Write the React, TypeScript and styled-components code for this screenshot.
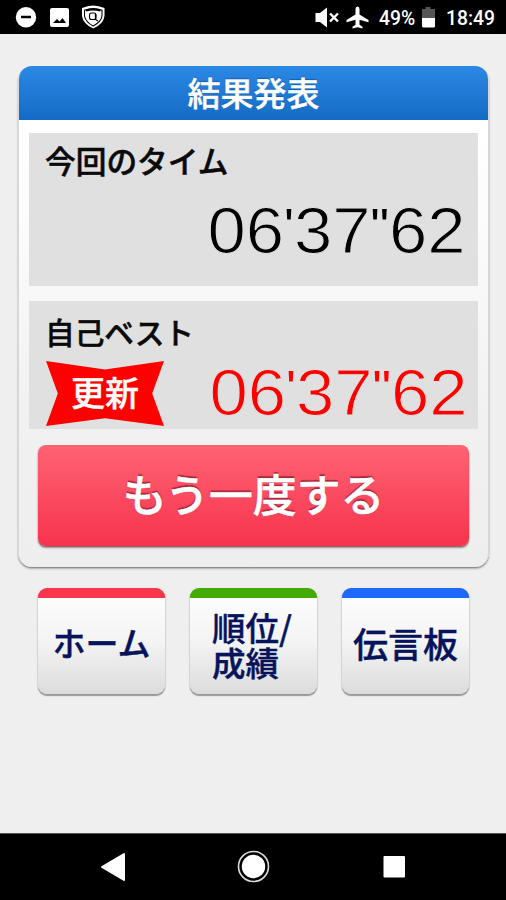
import React from "react";
import styled, { createGlobalStyle } from "styled-components";

const GlobalStyle = createGlobalStyle`
  * { box-sizing: border-box; }
  body { margin: 0; background: #efefef; }
`;

const Screen = styled.div`
  width: 506px;
  height: 900px;
  display: flex;
  flex-direction: column;
  background: #efefef;
  font-family: "Noto Sans CJK JP", sans-serif;
  overflow: hidden;
`;

const StatusBar = styled.header`
  height: 34px;
  flex: none;
  display: flex;
  justify-content: space-between;
  background: #000;
  color: #fff;
  font: 500 19.3px/37px Roboto, sans-serif;
`;

const StatusGroup = styled.div`
  display: flex;
  align-items: flex-start;
`;

const StatusText = styled.span<{ $left: number; $width: number }>`
  margin-left: ${(p) => p.$left}px;
  width: ${(p) => p.$width}px;
  white-space: nowrap;
`;

const Content = styled.main`
  flex: 1;
  padding: 32px 17px 0 18px;
`;

const Card = styled.section`
  height: 501px;
  border-radius: 14px;
  background: linear-gradient(#fff 12%, #fcfcfc 30%, #f1f1f1 70%, #eeeeee);
  box-shadow: inset 1px 0 #d8d8d8, inset -1px 0 #d8d8d8, 0 1px 1px #888, 0 2px 2px #b5b5b5;
  display: flex;
  flex-direction: column;
`;

const CardHeader = styled.h1`
  margin: 0 1px 0 1px;
  height: 54px;
  flex: none;
  border-radius: 13px 13px 0 0;
  background: linear-gradient(#2c88e5, #146bc4);
  color: #fff;
  font-size: 33px;
  font-weight: 500;
  line-height: 53px;
  text-align: center;
  -webkit-text-stroke: 0.4px #fff;
  text-shadow: 0 -1px 1px #1459a5;
`;

const Panel = styled.div<{ $height: number; $top: number }>`
  margin: ${(p) => p.$top}px 11px 0 11px;
  height: ${(p) => p.$height}px;
  flex: none;
  background: #e0e0e0;
  padding: 9px 12px 0 16px;
`;

const Label = styled.h2<{ $size: number; $line: number }>`
  margin: 0;
  height: 42px;
  font-size: ${(p) => p.$size}px;
  font-weight: 500;
  line-height: ${(p) => p.$line}px;
  white-space: nowrap;
  color: #0a0a0a;
  -webkit-text-stroke: 0.5px #0a0a0a;
`;

const TimeRow = styled.div<{ $top: number; $shift: number }>`
  display: flex;
  justify-content: space-between;
  align-items: flex-start;
  margin-top: ${(p) => p.$top}px;
  margin-right: ${(p) => -p.$shift}px;
`;

const TimeText = styled.div<{ $color: string }>`
  display: flex;
  margin-left: auto;
  font: 65px/64px "Liberation Sans", sans-serif;
  color: ${(p) => p.$color};
  -webkit-text-stroke: 1.1px #e0e0e0;
  transform: scaleX(1.06);
  transform-origin: right center;
  white-space: nowrap;
`;

const Mark = styled.span`
  font-size: 49px;
  line-height: 52.5px;
  -webkit-text-stroke-width: 0;
`;

const Ribbon = styled.div`
  width: 118px;
  height: 65px;
  margin-left: 1px;
  background: #f00;
  color: #fff;
  clip-path: polygon(0 0, 50% 13%, 100% 0, 90% 50%, 100% 100%, 50% 88%, 0 100%, 10% 50%);
  font-size: 34px;
  font-weight: 500;
  line-height: 62px;
  text-align: center;
  -webkit-text-stroke: 0.4px #fff;
`;

const RetryButton = styled.button`
  margin: 16px 20px 0 20px;
  height: 101px;
  flex: none;
  padding: 0 0 6px;
  border: 0;
  border-radius: 8px;
  background: linear-gradient(#ff6374, #f7334d);
  box-shadow: 0 1px 1px #9a5c64, 0 2px 2px #999;
  color: #fff;
  font: 500 43.8px/90px "Noto Sans CJK JP", sans-serif;
  -webkit-text-stroke: 0.6px #fff;
  text-shadow: 0 -2px 1px #a52a3c;
`;

const Menu = styled.nav`
  display: grid;
  grid-template-columns: repeat(3, 127px);
  gap: 25px;
  padding: 21px 0 0 20px;
`;

const MenuButton = styled.button<{ $accent: string; $size: number; $bottom: number; $left?: boolean }>`
  height: 106px;
  border: 0;
  padding: 11px 0 ${(p) => p.$bottom}px ${(p) => (p.$left ? 22 : 0)}px;
  border-radius: 9px;
  background: linear-gradient(${(p) => p.$accent} 0 10.5px, #fcfcfc 10.5px, #f4f4f4 50%, #dcdcdc);
  box-shadow: 0 2px 1px #999, 0 1px 2px #aaa;
  display: flex;
  align-items: center;
  justify-content: ${(p) => (p.$left ? "flex-start" : "center")};
  color: #07145c;
  font: 500 ${(p) => p.$size}px/35px "Noto Sans CJK JP", sans-serif;
  text-align: left;
  -webkit-text-stroke: 0.4px #07145c;
  white-space: pre;
`;

const NavBar = styled.footer`
  height: 67px;
  flex: none;
  background: #000;
  border-top: 1px solid #555;
`;

function Time({ color }: { color: string }) {
  return (
    <TimeText $color={color}>
      <span>06</span>
      <Mark>'</Mark>
      <span>37</span>
      <Mark>"</Mark>
      <span>62</span>
    </TimeText>
  );
}

export default function App() {
  return (
    <>
      <GlobalStyle />
      <Screen>
        <StatusBar>
          <StatusGroup>
            <svg width="120" height="34" viewBox="0 0 120 34">
              <circle cx="26" cy="17.3" r="10.2" fill="#fff" />
              <path d="M21 17h10" stroke="#000" strokeWidth="2.5" />
              <rect x="50" y="8" width="19" height="19" rx="2" fill="#fff" />
              <path d="M53 23l4-4 2.500 2.500L62.500 18l3.500 5z" fill="#000" />
              <path d="M82 8q11-5 22.500 0v8q-1 8-11.200 12.500Q83 24 82 16z" fill="#fff" />
              <path d="M84.500 10.200q9-3.500 17.500 0v6q-1 6-8.800 9.800Q85.500 22 84.500 16z" fill="none" stroke="#000" strokeWidth="1.100" />
              <path d="M86 10.500q7-2 14.500 0" stroke="#000" strokeWidth="2" fill="none" />
              <rect x="89.500" y="13" width="6.500" height="6.500" rx="2" fill="none" stroke="#000" strokeWidth="1.100" />
              <path d="M95.500 14v5.500l2.500 1.500" fill="none" stroke="#000" strokeWidth="1.300" />
            </svg>
          </StatusGroup>
          <StatusGroup>
            <svg width="64" height="34" viewBox="0 0 64 34">
              <path d="M1.500 13h4.500l7-5.500v20L6 22H1.500z" fill="#fff" />
              <path d="M16 13.500l8 8M24 13.500l-8 8" stroke="#fff" strokeWidth="2.400" />
              <path d="M47 6.500q2 0 2 2.500v5.500l9 5.500v2.300l-9-2.600v5l3 2V28.500l-5-1.300-5 1.300v-1.800l3-2v-5l-9 2.600V20l9-5.500V9q0-2.500 2-2.500z" transform="translate(-3.500 0)" fill="#fff" />
            </svg>
            <StatusText $left={1} $width={42}>49%</StatusText>
            <svg width="16" height="34" viewBox="0 0 16 34">
              <path d="M1 18V9h3.500V7h5v2H14v9z" fill="#555" />
              <path d="M1 18h13v8q0 1.500-1.500 1.500h-10Q1 27.500 1 26z" fill="#fff" />
            </svg>
            <StatusText $left={9} $width={60}>18:49</StatusText>
          </StatusGroup>
        </StatusBar>
        <Content>
          <Card>
            <CardHeader>結果発表</CardHeader>
            <Panel $height={153} $top={13}>
              <Label $size={30.7} $line={35}>今回のタイム</Label>
              <TimeRow $top={15} $shift={0}>
                <Time color="#000" />
              </TimeRow>
            </Panel>
            <Panel $height={128} $top={15}>
              <Label $size={29.7} $line={43}>自己ベスト</Label>
              <TimeRow $top={9} $shift={2}>
                <Ribbon>更新</Ribbon>
                <Time color="#f00" />
              </TimeRow>
            </Panel>
            <RetryButton>もう一度する</RetryButton>
          </Card>
          <Menu>
            <MenuButton $accent="#f9354b" $size={33} $bottom={9}>ホーム</MenuButton>
            <MenuButton $accent="#43ab05" $size={33.5} $bottom={6} $left>{"順位/\n成績"}</MenuButton>
            <MenuButton $accent="#1e68ff" $size={35} $bottom={9}>伝言板</MenuButton>
          </Menu>
        </Content>
        <NavBar>
          <svg width="506" height="66" viewBox="0 834 506 66">
            <path d="M102 867l22-13v26z" fill="#fff" stroke="#fff" strokeWidth="2" strokeLinejoin="round" />
            <circle cx="253.500" cy="866.500" r="15" fill="none" stroke="#ddd" strokeWidth="1.600" />
            <circle cx="253.500" cy="866.500" r="11.700" fill="#fff" />
            <rect x="383.500" y="856" width="21.500" height="21.500" rx="1" fill="#fff" />
          </svg>
        </NavBar>
      </Screen>
    </>
  );
}
